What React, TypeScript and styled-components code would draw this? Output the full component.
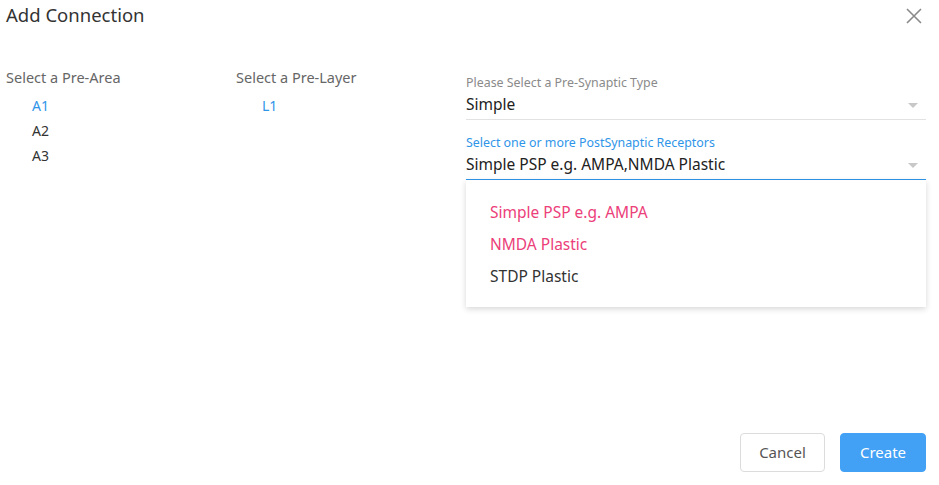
import * as React from 'react';
import styled, { createGlobalStyle } from 'styled-components';

const GlobalStyle = createGlobalStyle`
  html, body {
    margin: 0;
    padding: 0;
    background: #fff;
  }
  body {
    font-family: "Noto Sans", "Open Sans", sans-serif;
    color: #333;
  }
`;

const Dialog = styled.div`
  width: 939px;
  height: 485px;
  box-sizing: border-box;
  padding: 0 13px 13px 6px;
  display: flex;
  flex-direction: column;
  background: #fff;
`;

const Header = styled.div`
  height: 32px;
  display: flex;
  align-items: center;
  justify-content: space-between;
`;

const Title = styled.div`
  font-size: 18.5px;
  color: #333;
  margin-top: -4px;
`;

const CloseButton = styled.button`
  width: 24px;
  height: 24px;
  padding: 0;
  border: none;
  background: none;
  display: flex;
  align-items: center;
  justify-content: center;
  cursor: pointer;
`;

const Body = styled.div`
  flex: 1;
  display: grid;
  grid-template-columns: 230px 230px 1fr;
  padding-top: 34px;
`;

const Column = styled.div`
  display: flex;
  flex-direction: column;
`;

const ColumnTitle = styled.div`
  font-size: 14.5px;
  color: #666;
  line-height: 22px;
  margin-bottom: 5px;
`;

const Item = styled.div<{ $active?: boolean }>`
  font-size: 14px;
  line-height: 25px;
  padding-left: 26px;
  color: ${p => (p.$active ? '#2f95e8' : '#333')};
  cursor: pointer;
`;

const Field = styled.div`
  position: relative;
  margin-top: 10px;
  margin-bottom: 6px;
`;

const FieldLabel = styled.div<{ $focused?: boolean }>`
  font-size: 12.4px;
  line-height: 14px;
  color: ${p => (p.$focused ? '#2f95e8' : '#8a8a8a')};
`;

const SelectBox = styled.div<{ $focused?: boolean }>`
  display: flex;
  align-items: center;
  justify-content: space-between;
  height: 27px;
  font-size: 15.5px;
  color: #222;
  border-bottom: ${p => (p.$focused ? '1px solid #2f95e8' : '1px solid #e2e2e2')};
  padding-bottom: 2px;
`;

const Arrow = styled.span`
  width: 0;
  height: 0;
  border-left: 5px solid transparent;
  border-right: 5px solid transparent;
  border-top: 5px solid #c8c8c8;
  margin-right: 8px;
  margin-top: 4px;
`;

const Menu = styled.div`
  position: absolute;
  left: 0;
  right: 0;
  top: 100%;
  background: #fff;
  box-shadow: 0 2px 6px rgba(0, 0, 0, 0.16);
  padding: 16px 0 15px;
  z-index: 2;
`;

const MenuItem = styled.div<{ $selected?: boolean }>`
  height: 32px;
  line-height: 32px;
  padding-left: 24px;
  font-size: 15.5px;
  color: ${p => (p.$selected ? '#ec407a' : '#333')};
  cursor: pointer;
`;

const Footer = styled.div`
  display: flex;
  justify-content: flex-end;
  gap: 15px;
`;

const Button = styled.button<{ $primary?: boolean }>`
  height: 39px;
  width: ${p => (p.$primary ? 86 : 85)}px;
  padding: 0 0 2px;
  border-radius: 4px;
  font-family: inherit;
  font-size: 15px;
  cursor: pointer;
  border: 1px solid ${p => (p.$primary ? '#42a0f5' : '#dcdcdc')};
  background: ${p => (p.$primary ? '#42a0f5' : '#fff')};
  color: ${p => (p.$primary ? '#fff' : '#555')};
`;

const areas = ['A1', 'A2', 'A3'];
const layers = ['L1'];
const receptors = [
  { label: 'Simple PSP e.g. AMPA', selected: true },
  { label: 'NMDA Plastic', selected: true },
  { label: 'STDP Plastic', selected: false },
];

export default function App() {
  const [area, setArea] = React.useState('A1');
  const [layer, setLayer] = React.useState('L1');

  return (
    <Dialog>
      <GlobalStyle />
      <Header>
        <Title>Add Connection</Title>
        <CloseButton aria-label="close">
          <svg width="18" height="18" viewBox="0 0 18 18">
            <path d="M2 2 L16 16 M16 2 L2 16" stroke="#8a8a8a" strokeWidth="1.6" fill="none" />
          </svg>
        </CloseButton>
      </Header>
      <Body>
        <Column>
          <ColumnTitle>Select a Pre-Area</ColumnTitle>
          {areas.map(a => (
            <Item key={a} $active={a === area} onClick={() => setArea(a)}>{a}</Item>
          ))}
        </Column>
        <Column>
          <ColumnTitle>Select a Pre-Layer</ColumnTitle>
          {layers.map(l => (
            <Item key={l} $active={l === layer} onClick={() => setLayer(l)}>{l}</Item>
          ))}
        </Column>
        <Column>
          <Field>
            <FieldLabel>Please Select a Pre-Synaptic Type</FieldLabel>
            <SelectBox>
              <span>Simple</span>
              <Arrow />
            </SelectBox>
          </Field>
          <Field>
            <FieldLabel $focused>Select one or more PostSynaptic Receptors</FieldLabel>
            <SelectBox $focused>
              <span>Simple PSP e.g. AMPA,NMDA Plastic</span>
              <Arrow />
            </SelectBox>
            <Menu>
              {receptors.map(r => (
                <MenuItem key={r.label} $selected={r.selected}>{r.label}</MenuItem>
              ))}
            </Menu>
          </Field>
        </Column>
      </Body>
      <Footer>
        <Button>Cancel</Button>
        <Button $primary>Create</Button>
      </Footer>
    </Dialog>
  );
}
